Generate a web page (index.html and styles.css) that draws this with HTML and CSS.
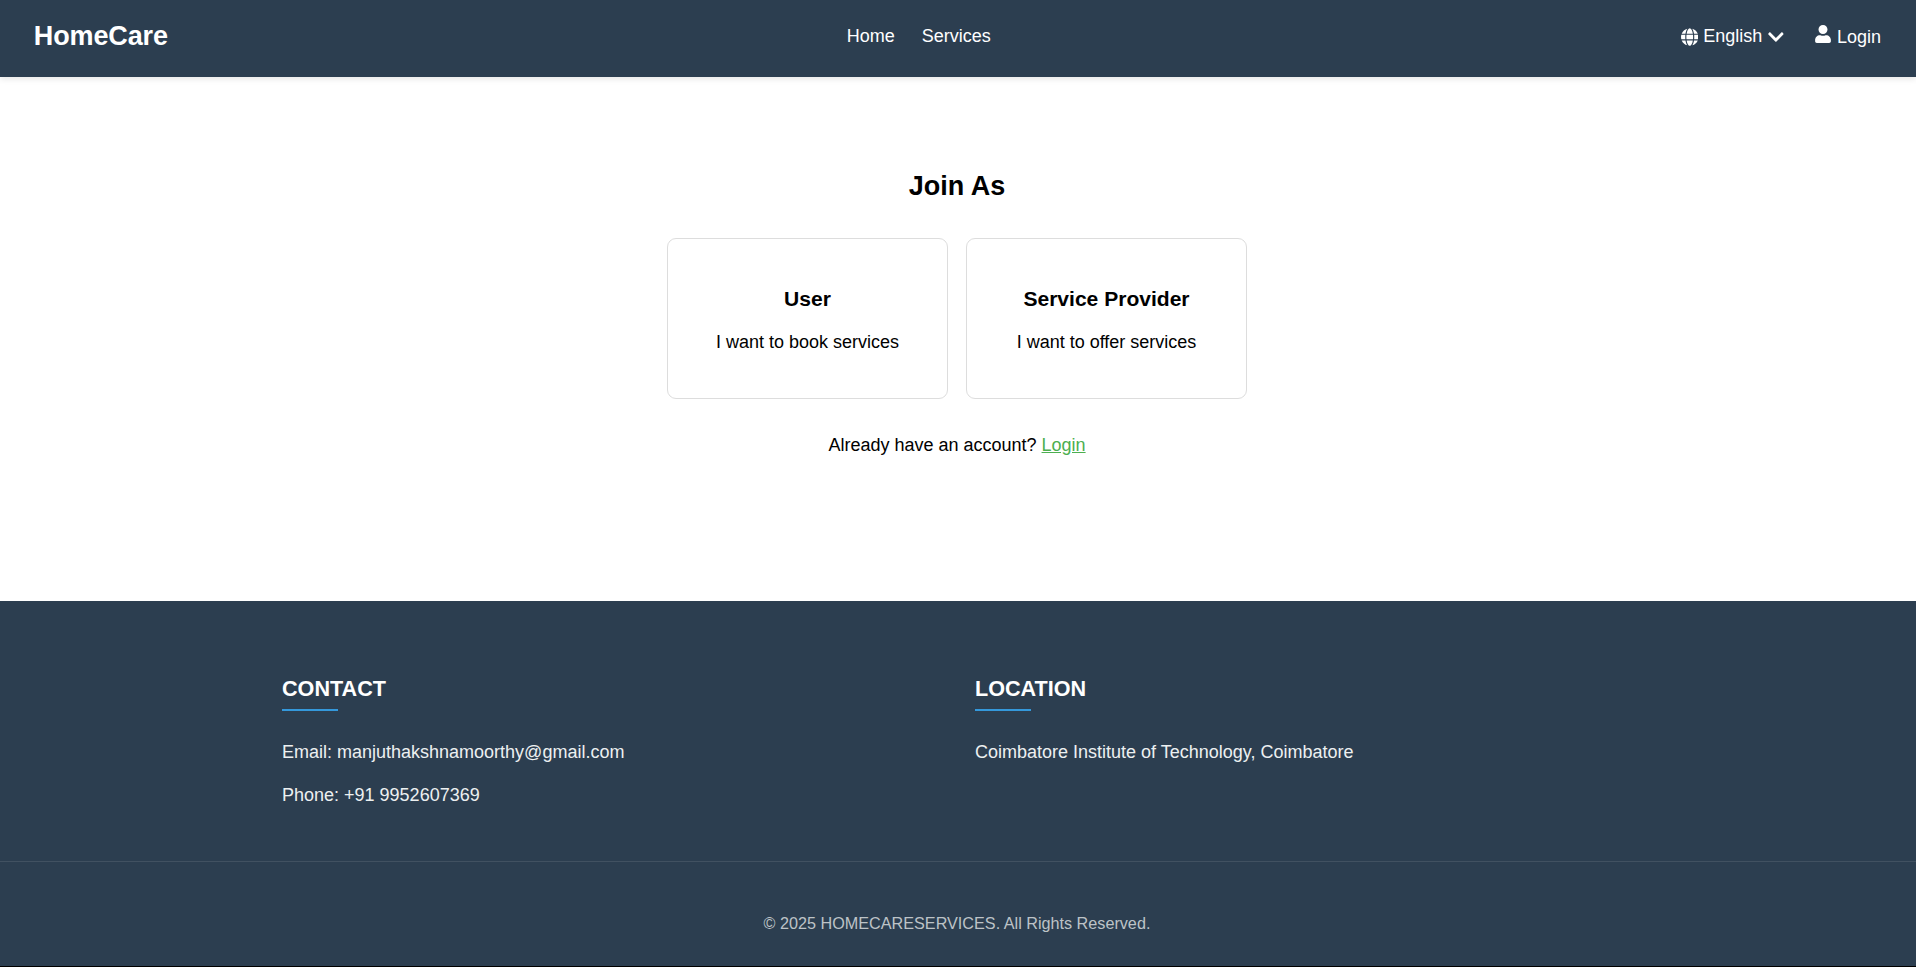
FILE: index.html
```html
<!DOCTYPE html>
<html lang="en">
<head>
<meta charset="utf-8">
<title>HomeCare</title>
<link rel="stylesheet" href="styles.css">
</head>
<body>
<header class="navbar">
  <div class="logo">HomeCare</div>
  <nav class="nav-links"><a href="#">Home</a><a href="#">Services</a></nav>
  <div class="actions">
    <div class="language">
      <svg class="globe" viewBox="0 0 496 512"><path fill="currentColor" d="M336.500 160C322 70.700 287.800 8 248 8s-74 62.700-88.500 152h177zM152 256c0 22.200 1.200 43.500 3.300 64h185.300c2.100-20.500 3.300-41.800 3.300-64s-1.200-43.500-3.300-64H155.300c-2.100 20.500-3.300 41.800-3.300 64zm324.700-96c-28.600-67.900-86.500-120.400-158-141.600 24.400 33.800 41.200 84.700 50 141.600h108zM177.200 18.400C105.800 39.600 47.800 92.100 19.300 160h108c8.700-56.900 25.500-107.800 49.900-141.600zM487.400 192H372.700c2.100 21 3.300 42.500 3.300 64s-1.200 43-3.300 64h114.600c5.500-20.500 8.600-41.800 8.600-64s-3.100-43.500-8.500-64zM120 256c0-21.500 1.200-43 3.300-64H8.600C3.200 212.500 0 233.800 0 256s3.200 43.500 8.600 64h114.600c-2-21-3.200-42.500-3.200-64zm39.500 96c14.500 89.300 48.700 152 88.500 152s74-62.700 88.500-152h-177zm159.300 141.600c71.400-21.200 129.400-73.700 158-141.600h-108c-8.800 56.900-25.600 107.800-50 141.600zM19.300 352c28.600 67.900 86.500 120.400 158 141.600-24.400-33.800-41.200-84.700-50-141.600h-108z"/></svg>
      <span>English</span>
      <svg class="chevron" viewBox="0 0 448 512"><path fill="currentColor" d="M207.029 381.476L12.686 187.132c-9.373-9.373-9.373-24.569 0-33.941l22.667-22.667c9.357-9.357 24.522-9.375 33.901-.04L224 284.505l154.745-154.021c9.379-9.335 24.544-9.317 33.901.04l22.667 22.667c9.373 9.373 9.373 24.569 0 33.941L240.971 381.476c-9.373 9.372-24.569 9.372-33.942 0z"/></svg>
    </div>
    <a class="login" href="#">
      <svg class="person" viewBox="0 0 448 512"><path fill="currentColor" d="M224 256c70.700 0 128-57.300 128-128S294.700 0 224 0 96 57.300 96 128s57.300 128 128 128zm89.600 32h-16.700c-22.200 10.200-46.900 16-72.900 16s-50.600-5.800-72.900-16h-16.700C60.200 288 0 348.200 0 422.400V464c0 26.500 21.500 48 48 48h352c26.500 0 48-21.500 48-48v-41.600c0-74.200-60.200-134.400-134.400-134.400z"/></svg>
      <span>Login</span>
    </a>
  </div>
</header>
<main class="join">
  <h2>Join As</h2>
  <div class="cards">
    <section class="card"><h3>User</h3><p>I want to book services</p></section>
    <section class="card"><h3>Service Provider</h3><p>I want to offer services</p></section>
  </div>
  <p class="account">Already have an account? <a href="#">Login</a></p>
</main>
<footer class="footer">
  <div class="footer-columns">
    <section><h4>CONTACT</h4><p>Email: manjuthakshnamoorthy@gmail.com</p><p>Phone: +91 9952607369</p></section>
    <section><h4>LOCATION</h4><p>Coimbatore Institute of Technology, Coimbatore</p></section>
  </div>
  <div class="copyright">© 2025 HOMECARESERVICES. All Rights Reserved.</div>
</footer>
</body>
</html>
```
FILE: styles.css
```css
* { box-sizing: border-box; margin: 0; padding: 0; }
body {
  height: 967px;
  display: flex;
  flex-direction: column;
  font: 18px/20px "Liberation Sans", Arial, sans-serif;
  color: #000;
  background: #fff;
  overflow: hidden;
}
.navbar {
  height: 77px;
  flex: none;
  display: flex;
  align-items: flex-start;
  padding: 0 35px 0 33.75px;
  background: #2c3e50;
  color: #fff;
  box-shadow: 0 2px 6px rgba(0, 0, 0, 0.1);
}
.navbar a { color: inherit; text-decoration: none; }
.logo { width: 813px; padding-top: 21px; font-size: 27px; font-weight: 700; line-height: 30px; letter-spacing: -0.12px; }
.nav-links { display: flex; gap: 27px; padding-top: 26px; }
.actions { display: flex; gap: 31px; margin-left: auto; }
.language, .login { display: flex; }
.language span { padding-top: 26px; }
.globe { width: 17.5px; height: 18px; margin: 28px 5px 0 0; }
.chevron { width: 15.75px; height: 18px; margin: 28px 0 0 6px; }
.person { width: 16px; height: 18px; margin: 25px 6px 0 0; }
.login span { padding-top: 27px; }
.join { height: 524px; flex: none; padding: 94px 2px 0 0; text-align: center; }
.join h2 { font-size: 27px; line-height: 30px; }
.cards { display: flex; justify-content: center; gap: 18px; margin-top: 37px; }
.card { width: 281px; height: 161px; padding-top: 48px; border: 1px solid #ddd; border-radius: 9px; }
.card h3 { font-size: 21.06px; line-height: 23px; }
.card p { margin-top: 22px; }
.account { margin-top: 36px; }
.account a { color: #4caf50; }
.footer { height: 365px; flex: none; background: #2c3e50; color: #ecf0f1; }
.footer-columns {
  display: grid;
  grid-template-columns: 693px 1fr;
  height: 260px;
  padding: 75px 0 0 282px;
}
.footer h4 { font-size: 21.6px; line-height: 25px; color: #fff; }
.footer h4::after { content: ""; display: block; width: 56px; height: 2px; margin-top: 8px; background: #3498db; }
.footer-columns p { margin-top: 23px; }
.footer h4 + p { margin-top: 31px; }
.copyright {
  height: 105px;
  padding: 51px 2px 0 0;
  border-top: 1px solid #415161;
  text-align: center;
  font-size: 16.2px;
  line-height: 20px;
  color: #bdc3c7;
}
body::after { content: ""; flex: 1; background: #000; }
```
